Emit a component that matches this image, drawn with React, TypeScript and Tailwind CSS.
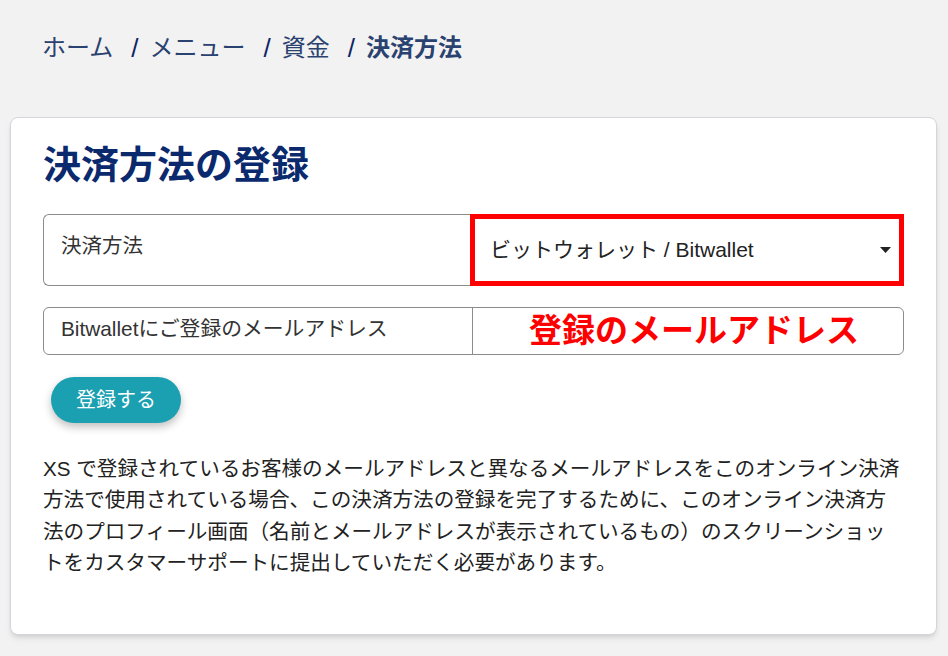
import React from 'react';

const font = "font-['Liberation_Sans','Noto_Sans_CJK_JP',sans-serif]";

const crumbs = ['ホーム', 'メニュー', '資金'];

export default function App() {
  return (
    <div className={`min-h-screen bg-[#f2f2f2] ${font}`}>
      <nav className="flex items-center pl-[42px] pt-8 text-[24px] leading-8 text-[#2a4270]">
        {crumbs.map(c => (
          <React.Fragment key={c}>
            <span>{c}</span>
            <span className="ml-[18px] mr-[11px] text-[26px] text-[#0b2566]">/</span>
          </React.Fragment>
        ))}
        <span className="font-bold">決済方法</span>
      </nav>

      <div className="mx-[10px] mt-[53px] w-[927px] rounded-lg border border-[#d3d6de] bg-white px-8 pt-[23px] pb-[56px] shadow-md">
        <h1 className="text-[38px] font-bold leading-[48px] text-[#0b2a6e]">決済方法の登録</h1>

        <div className="mt-[25px] flex h-[72px]">
          <div className="w-[427px] rounded-l-md border border-r-0 border-[#8c8c8c] px-[17px] pt-4 text-[20.5px] leading-[30px] text-[#333]">
            決済方法
          </div>
          <div className="flex flex-1 items-center justify-between border-[5px] border-[#ff0000] pl-[15px] pr-[8px] text-[21px] text-[#222]">
            <span>ビットウォレット / Bitwallet</span>
            <svg width="11" height="6" viewBox="0 0 11 6">
              <path d="M0 0h11L5.5 6z" fill="#222" />
            </svg>
          </div>
        </div>

        <div className="mt-[21px] flex h-12 rounded-md border border-[#8c8c8c]">
          <div className="flex w-[429px] items-center border-r border-[#8c8c8c] px-[17px] pb-1 text-[20.8px] text-[#333]">
            Bitwalletにご登録のメールアドレス
          </div>
          <div className="flex flex-1 items-center justify-center pl-3 text-[33px] font-bold text-[#ff0000]">
            登録のメールアドレス
          </div>
        </div>

        <button className="mt-[22px] ml-2 h-[46px] w-[130px] rounded-full bg-[#1aa0b1] text-[20px] text-white shadow-[0_4px_8px_rgba(0,0,0,0.25)]">
          登録する
        </button>

        <p className="mt-[30px] whitespace-nowrap text-[20.6px] leading-[31.3px] text-[#222]">
          XS で登録されているお客様のメールアドレスと異なるメールアドレスをこのオンライン決済
          <br />
          方法で使用されている場合、この決済方法の登録を完了するために、このオンライン決済方
          <br />
          法のプロフィール画面（名前とメールアドレスが表示されているもの）のスクリーンショッ
          <br />
          トをカスタマーサポートに提出していただく必要があります。
        </p>
      </div>
    </div>
  );
}
